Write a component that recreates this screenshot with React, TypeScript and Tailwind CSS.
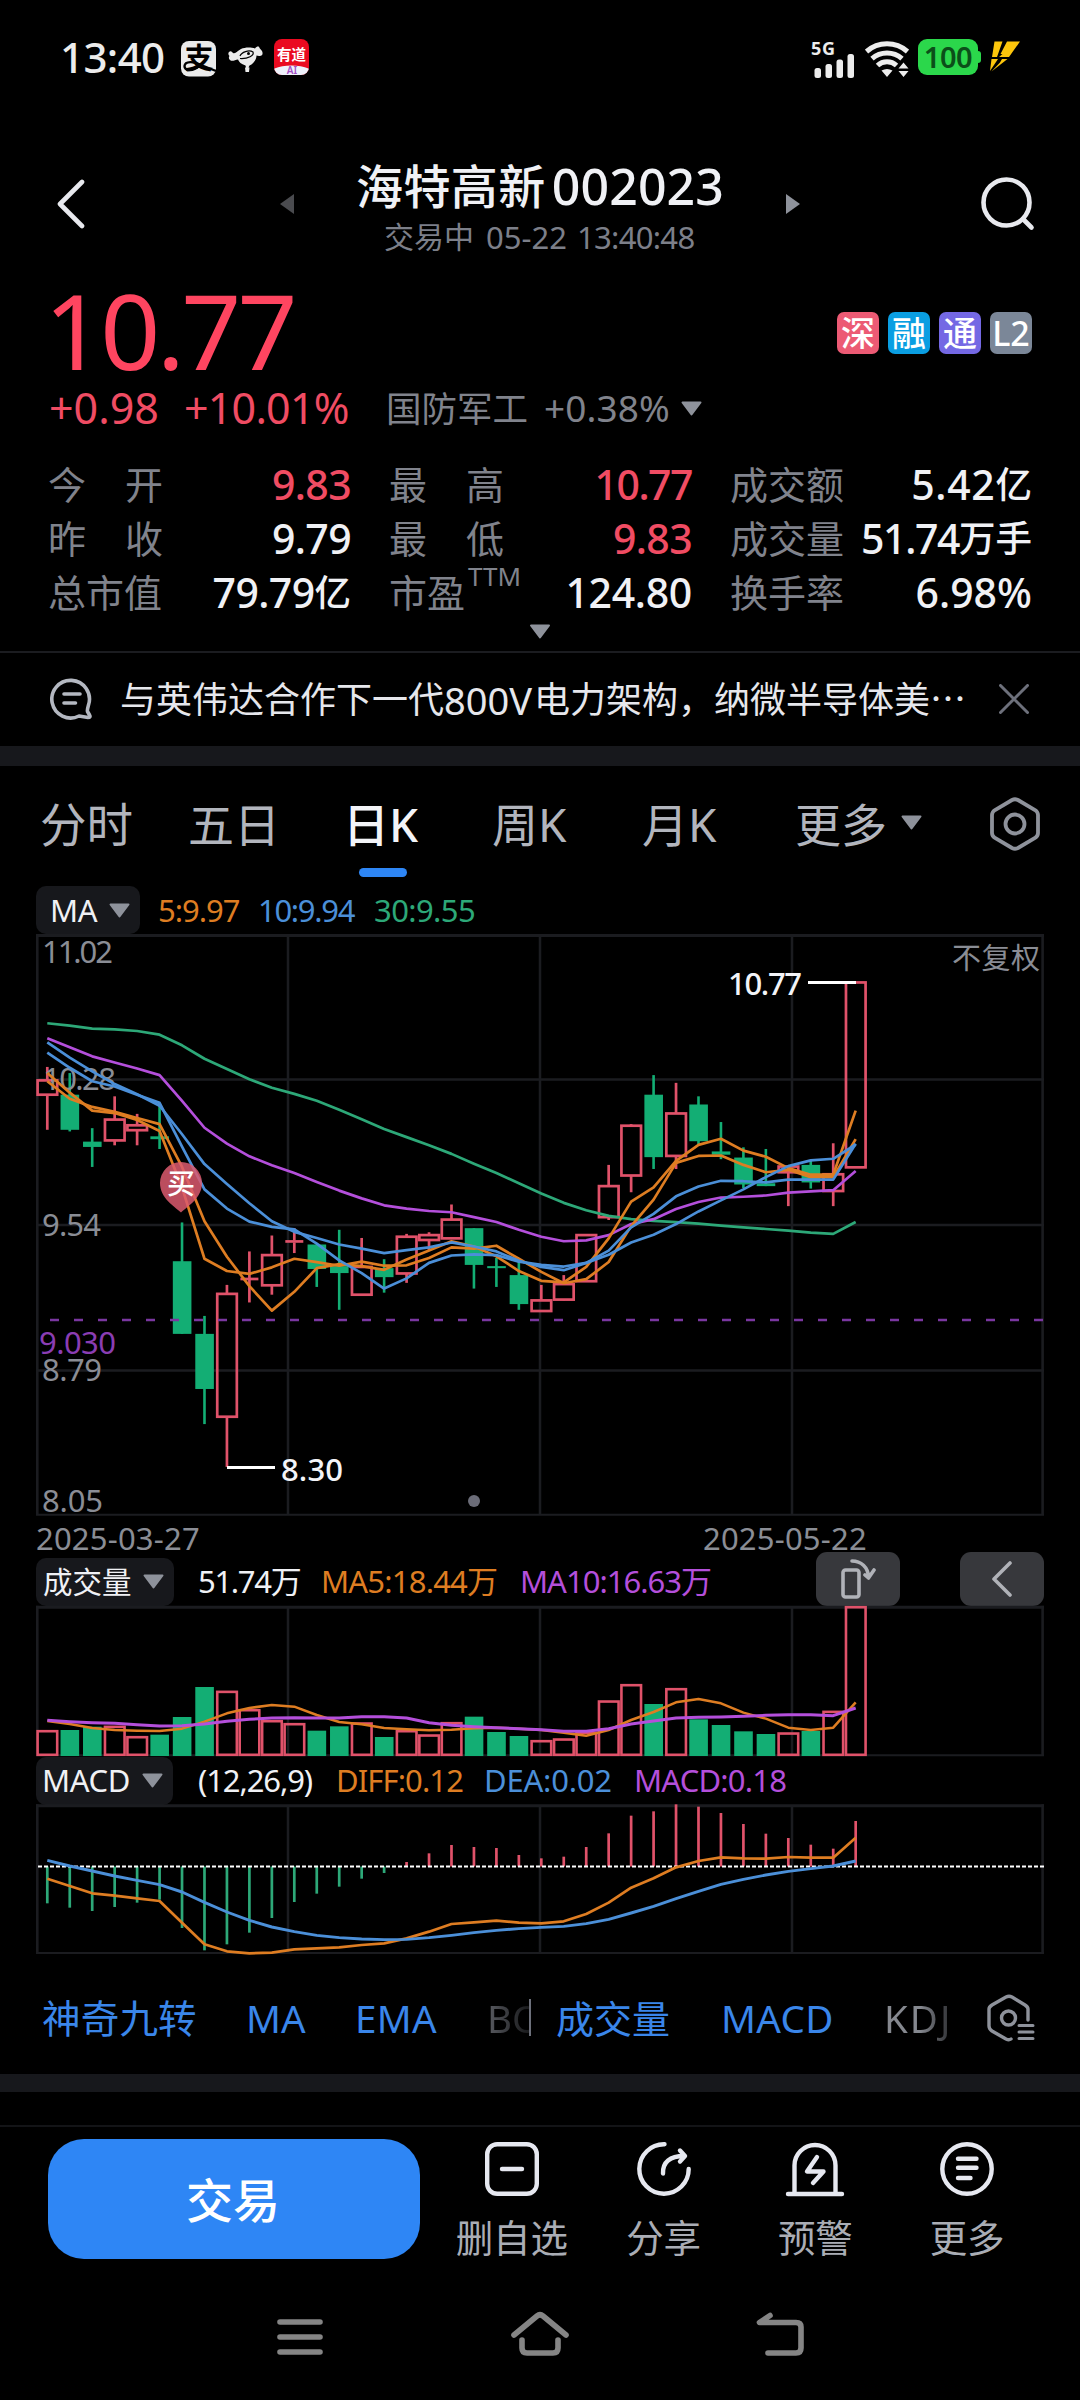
import React from "react";

type Candle = { up: boolean; hi: number; top: number; bot: number; lo: number };

const c = (k: "r" | "g", hi: number, top: number, bot: number, lo: number): Candle => ({
  up: k === "r",
  hi,
  top,
  bot,
  lo,
});

const FIRST_X = 47.3;
const STEP = 22.455;
const cx = (i: number) => FIRST_X + i * STEP;

// Price chart values are offsets on a 2.45-per-pixel scale; the sub charts use 3-per-pixel.
const py = (v: number) => 920 + v / 2.45;
const sy = (v: number) => 1540 + v / 3;

const candles: Candle[] = [
  c("r", 360, 393, 428, 514), c("g", 375, 428, 514, 518), c("g", 510, 543, 556, 605),
  c("r", 432, 489, 540, 552), c("r", 475, 503, 515, 552), c("g", 455, 530, 537, 561),
  c("g", 741, 836, 1014, 1014), c("g", 970, 1014, 1149, 1235), c("r", 894, 916, 1217, 1340),
  c("r", 812, 877, 882, 937), c("r", 773, 821, 895, 918), c("r", 755, 785, 790, 816),
  c("g", 795, 795, 855, 899), c("g", 759, 848, 865, 955), c("r", 779, 850, 918, 918),
  c("g", 831, 853, 875, 913), c("r", 769, 776, 866, 889), c("r", 765, 772, 784, 810),
  c("r", 697, 734, 780, 780), c("g", 755, 755, 845, 903), c("g", 828, 848, 853, 899),
  c("g", 838, 870, 941, 955), c("r", 894, 932, 958, 958), c("r", 870, 892, 930, 932),
  c("r", 772, 772, 885, 885), c("r", 600, 652, 728, 735), c("r", 500, 504, 626, 667),
  c("g", 380, 428, 581, 610), c("r", 399, 474, 578, 610), c("g", 432, 452, 542, 550),
  c("g", 495, 567, 575, 586), c("g", 557, 582, 648, 657), c("g", 561, 645, 652, 652),
  c("r", 603, 604, 618, 701), c("g", 590, 600, 643, 658), c("r", 547, 623, 664, 701),
  c("r", 153, 153, 606, 606),
];

const ma30 = [253, 259, 266, 268, 272, 281, 307, 340, 365, 390, 411, 426, 443, 465, 488, 512, 532, 552, 573, 597, 620, 645, 670, 693, 711, 725, 733, 737, 740, 744, 749, 753, 757, 761, 766, 769, 740];
const ma20 = [290, 312, 334, 349, 364, 380, 443, 509, 548, 579, 601, 620, 642, 663, 682, 699, 707, 713, 716, 728, 740, 759, 776, 787, 785, 772, 745, 733, 708, 691, 680, 678, 675, 668, 665, 662, 615];
const ma10a = [300, 337, 371, 402, 427, 455, 525, 598, 647, 694, 738, 764, 779, 795, 805, 816, 809, 802, 790, 800, 812, 835, 850, 858, 840, 810, 753, 720, 677, 653, 639, 640, 643, 636, 636, 636, 548];
const ma10b = [325, 362, 395, 408, 428, 448, 555, 660, 707, 739, 752, 758, 793, 834, 865, 903, 878, 840, 822, 819, 821, 837, 845, 849, 840, 820, 790, 771, 745, 714, 687, 660, 630, 603, 589, 585, 550];
const ma5a = [375, 423, 467, 473, 490, 517, 655, 830, 860, 867, 851, 830, 838, 847, 837, 847, 846, 828, 802, 805, 798, 830, 862, 890, 880, 838, 750, 685, 595, 578, 577, 600, 618, 612, 630, 630, 537];
const ma5b = [395, 438, 458, 470, 485, 500, 605, 738, 825, 897, 957, 911, 853, 843, 848, 857, 832, 810, 787, 800, 824, 860, 884, 888, 850, 780, 690, 655, 590, 551, 536, 565, 580, 608, 624, 624, 467];

const volTop = [570, 570, 560, 557, 588, 584, 531, 441, 452, 507, 540, 549, 572, 559, 547, 591, 570, 583, 546, 530, 576, 588, 600, 595, 575, 481, 432, 492, 444, 538, 555, 574, 582, 577, 573, 512, 198];
const vol5 = [543, 552, 564, 570, 572, 573, 566, 545, 520, 504, 495, 500, 525, 546, 553, 564, 568, 571, 569, 565, 563, 566, 570, 578, 587, 570, 540, 516, 487, 477, 490, 518, 536, 563, 570, 563, 487];
const vol10 = [541, 545, 548, 550, 554, 558, 557, 552, 544, 538, 534, 533, 534, 534, 530, 530, 534, 548, 556, 560, 563, 566, 569, 574, 574, 566, 552, 543, 534, 532, 531, 529, 526, 524, 524, 527, 504];

const macd = [1090, 1103, 1113, 1101, 1088, 1079, 1164, 1231, 1213, 1178, 1134, 1086, 1061, 1040, 1016, 999, 966, 940, 915, 921, 924, 945, 955, 950, 921, 880, 827, 814, 793, 800, 819, 852, 881, 894, 914, 926, 843];
const diff = [1016, 1038, 1060, 1067, 1075, 1083, 1148, 1213, 1234, 1240, 1238, 1228, 1225, 1222, 1215, 1210, 1195, 1175, 1152, 1147, 1142, 1148, 1150, 1144, 1122, 1088, 1043, 1015, 982, 963, 952, 955, 956, 951, 953, 953, 893];
const dea = [961, 978, 993, 1008, 1021, 1034, 1056, 1087, 1116, 1141, 1161, 1175, 1186, 1193, 1197, 1199, 1198, 1193, 1186, 1178, 1171, 1166, 1162, 1159, 1151, 1138, 1119, 1099, 1076, 1054, 1033, 1018, 1005, 994, 986, 978, 963];

const RED = "#e0526a";
const GREEN = "#13ae74";
const GRID = "#1b1c20";
const ORANGE = "#de7d22";
const BLUE = "#4b8fd8";
const PURPLE = "#b44fdb";
const TEAL = "#2da878";

const pts = (a: number[], f: (v: number) => number) => a.map((v, i) => `${cx(i)},${f(v)}`).join(" ");

function Series({ data, color, f, w = 2.7 }: { data: number[]; color: string; f: (v: number) => number; w?: number }) {
  return <polyline points={pts(data, f)} fill="none" stroke={color} strokeWidth={w} strokeLinejoin="round" />;
}

function Grid({ top, bottom }: { top: number; bottom: number }) {
  return (
    <g stroke={GRID}>
      {[288, 540, 792].map((x) => (
        <line key={x} x1={x} x2={x} y1={top} y2={bottom} strokeWidth={2.5} />
      ))}
      <line x1={37.3} x2={37.3} y1={top - 1.5} y2={bottom} strokeWidth={2.6} />
      <line x1={1042.6} x2={1042.6} y1={top - 1.5} y2={bottom} strokeWidth={2.6} />
      <line x1={36} x2={1044} y1={top} y2={top} strokeWidth={3} />
      <line x1={36} x2={1044} y1={bottom} y2={bottom} strokeWidth={2} />
    </g>
  );
}

function ChartLabel(p: { x: number; y: number; w: number; fill?: string; size?: number; weight?: number; children: string }) {
  return (
    <text
      x={p.x}
      y={p.y}
      textLength={p.w}
      fill={p.fill ?? "#8a8d95"}
      fontSize={p.size ?? 31}
      fontWeight={p.weight ?? 400}
    >
      {p.children}
    </text>
  );
}

function PriceChart() {
  return (
    <svg className="block shrink-0" width={1080} height={584} viewBox="0 933 1080 584">
      <Grid top={935.5} bottom={1514.7} />
      {[1079.5, 1225, 1370.5].map((y) => (
        <line key={y} x1={36} x2={1044} y1={y} y2={y} stroke={GRID} strokeWidth={2.5} />
      ))}
      {candles.map((d, i) => {
        const x = cx(i);
        const t = py(d.top);
        const b = py(d.bot);
        return d.up ? (
          <g key={i} stroke={RED} strokeWidth={2.7} fill="none">
            <line x1={x} x2={x} y1={py(d.hi)} y2={t} />
            {b - t < 3 ? (
              <line x1={x - 9} x2={x + 9} y1={(t + b) / 2} y2={(t + b) / 2} />
            ) : (
              <rect x={x - 9.7} y={t} width={19.6} height={b - t} />
            )}
            <line x1={x} x2={x} y1={b} y2={py(d.lo)} />
          </g>
        ) : (
          <g key={i} fill={GREEN}>
            <rect x={x - 1.3} y={py(d.hi)} width={2.6} height={py(d.lo) - py(d.hi)} />
            <rect x={x - 9.2} y={t} width={18.6} height={b - t} />
          </g>
        );
      })}
      <line x1={50} x2={1043} y1={1320} y2={1320} stroke="#7a37a0" strokeWidth={2.6} strokeDasharray="9 15" />
      <ChartLabel x={42} y={963} w={71}>11.02</ChartLabel>
      <ChartLabel x={43} y={1090} w={73}>10.28</ChartLabel>
      <ChartLabel x={42} y={1236} w={59}>9.54</ChartLabel>
      <ChartLabel x={42} y={1381} w={60}>8.79</ChartLabel>
      <ChartLabel x={42} y={1512} w={61}>8.05</ChartLabel>
      <ChartLabel x={39} y={1354} w={77} fill="#8a3db3">9.030</ChartLabel>
      <Series data={ma30} color={TEAL} f={py} />
      <Series data={ma20} color={PURPLE} f={py} />
      <Series data={ma5a} color={ORANGE} f={py} />
      <Series data={ma5b} color={ORANGE} f={py} />
      <Series data={ma10a} color={BLUE} f={py} />
      <Series data={ma10b} color={BLUE} f={py} />
      <ChartLabel x={952} y={969} w={88} size={29}>不复权</ChartLabel>
      <line x1={808} x2={856} y1={982.5} y2={982.5} stroke="#fff" strokeWidth={2.8} />
      <ChartLabel x={728} y={995} w={74} fill="#f3f4f8" weight={500}>10.77</ChartLabel>
      <line x1={227} x2={275} y1={1467.5} y2={1467.5} stroke="#fff" strokeWidth={2.8} />
      <ChartLabel x={281} y={1481} w={62} fill="#f3f4f8" weight={500}>8.30</ChartLabel>
      <circle cx={474} cy={1501} r={6} fill="#6b6c78" />
      <path
        d="M181 1212.5 C174 1206 160 1198 160 1183 A21 21 0 0 1 202 1183 C202 1198 188 1206 181 1212.5Z"
        fill="#dc5a6e"
        fillOpacity={0.85}
      />
      <text x={181} y={1194} textAnchor="middle" fontSize={28} fontWeight={500} fill="#fff">买</text>
    </svg>
  );
}

function VolumeChart() {
  return (
    <svg className="block shrink-0" width={1080} height={152} viewBox="0 1605 1080 152">
      <Grid top={1607.3} bottom={1755.3} />
      {volTop.map((v, i) => {
        const x = cx(i);
        const t = sy(v);
        return candles[i].up ? (
          <rect key={i} x={x - 9.7} y={t + 1.2} width={19.6} height={1754.8 - t - 1.2} fill="none" stroke={RED} strokeWidth={2.6} />
        ) : (
          <rect key={i} x={x - 9.2} y={t} width={18.6} height={1756 - t} fill={GREEN} />
        );
      })}
      <Series data={vol5} color={ORANGE} f={sy} w={2.5} />
      <Series data={vol10} color={PURPLE} f={sy} w={3} />
    </svg>
  );
}

function MacdChart() {
  return (
    <svg className="block shrink-0" width={1080} height={151} viewBox="0 1804 1080 151">
      <Grid top={1805.7} bottom={1953} />
      {macd.map((v, i) => (
        <line key={i} x1={cx(i)} x2={cx(i)} y1={1866.5} y2={sy(v)} stroke={v > 980 ? TEAL : RED} strokeWidth={2.7} />
      ))}
      <line x1={38} x2={1044} y1={1866.5} y2={1866.5} stroke="#fff" strokeWidth={2.2} strokeDasharray="4 2" />
      <Series data={diff} color={ORANGE} f={sy} w={2.7} />
      <Series data={dea} color={BLUE} f={sy} w={2.9} />
    </svg>
  );
}

function Down({ w = 21, h = 15, color = "#8e929b" }: { w?: number; h?: number; color?: string }) {
  return (
    <svg className="block shrink-0" width={w} height={h} viewBox="0 0 21 15">
      <path d="M1.5 1.5H19.5L10.5 13.5Z" fill={color} stroke={color} strokeWidth={2} strokeLinejoin="round" />
    </svg>
  );
}

function StatusBar() {
  return (
    <div className="flex h-[114px] shrink-0 items-center">
      <span className="ml-[60px] w-[121px] text-[42px] font-medium leading-[58px] text-[#ececec]">
        <span className="tracking-[-0.6px]">13:40</span>
      </span>
      <svg className="mt-[3px] block" width={36} height={36} viewBox="0 0 36 36">
        <rect width={35} height={35.5} rx={8} fill="#ebebeb" />
        <text x={18} y={28} textAnchor="middle" fontSize={29} fontWeight={600} fill="#000">支</text>
        <path d="M18 25C12 31 3.500 30 3.500 25C4 20 13 20 20 24L35 30" fill="none" stroke="#000" strokeWidth={2.400} />
      </svg>
      <svg className="ml-[11px] mt-[4px] block" width={35} height={27} viewBox="0 0 35 27">
        <path
          d="M1 6Q3 4 5 7C8 8 9 5 13 3C17 1 23 1 27 2.500C29 0 31 0 31.500 2L34 5C35.500 8 34 10.500 31 10L28.500 9.500C28.500 14 25 18 21.500 19.500L20.500 21.500H21.500L21 26H17.500L17 21.500H18L17.500 19.500C13 18 11 16 10 13.500C7 14 4 16 2 14Q0 12 1.500 10Q-0.500 8 1 6Z"
          fill="#ebebeb"
        />
        <path d="M12 10C13.500 6 21 3.500 25 6C26.500 9.500 20 13 12 12.500" fill="none" stroke="#000" strokeWidth={1.2} />
        <circle cx={20.500} cy={7.500} r={1.500} fill="#000" />
      </svg>
      <svg className="ml-[11px] block" width={36} height={37} viewBox="0 0 36 37">
        <clipPath id="yd">
          <rect width={35} height={36} rx={8} />
        </clipPath>
        <g clipPath="url(#yd)">
          <rect width={36} height={37} fill="#ea0a20" />
          <ellipse cx={17.500} cy={37} rx={24} ry={10.500} fill="#eef1fb" />
        </g>
        <text x={17.500} y={20.500} textAnchor="middle" fontSize={14.500} fontWeight={600} fill="#fff">有道</text>
        <text x={18} y={35} textAnchor="middle" fontSize={10} fontWeight={600} fill="#a34ec4">AI</text>
      </svg>
      <div className="flex-1" />
      <svg className="mt-[3px] block" width={44} height={38} viewBox="0 0 44 38">
        <text x={0} y={15} fontSize={18} fontWeight={700} textLength={24} fill="#ececec">5G</text>
        <g fill="#ececec">
          <rect x={3.500} y={28} width={6.500} height={10} rx={2.500} />
          <rect x={14.500} y={24} width={6.500} height={14} rx={2.500} />
          <rect x={25.500} y={19.500} width={6.500} height={18.500} rx={2.500} />
          <rect x={36.500} y={14} width={6.500} height={24} rx={2.500} />
        </g>
      </svg>
      <svg className="ml-[10px] mt-[2px] block" width={44} height={37} viewBox="0 0 44 37">
        <g fill="none" stroke="#ececec" strokeWidth={5}>
          <path d="M1.500 11.500A31 31 0 0 1 42.500 11.500" />
          <path d="M7 18.700A22.500 22.500 0 0 1 37 18.700" />
          <path d="M12.500 25.500A14 14 0 0 1 31.500 25.500" />
        </g>
        <path d="M16.500 30.500Q22 27.500 27.500 30.500L22 37Z M38.500 22.500L43.500 28.500H33.500Z M33.500 31H43.500L38.500 37Z" fill="#ececec" />
      </svg>
      <div className="ml-[9px] mt-[-1px] flex items-center">
        <div className="flex h-[36px] w-[60px] items-center justify-center rounded-[9px] bg-[#2bd74b] text-[29px] font-semibold leading-[36px] tracking-[-0.5px] text-[#0b4f19]">
          100
        </div>
        <div className="h-[12px] w-[3px] rounded-r-[3px] bg-[#2bd74b]" />
      </div>
      <svg className="ml-[9px] mr-[60px] mt-[-1px] block" width={30} height={31} viewBox="0 0 30 31">
        <path d="M4.500 0.500H12.500L7 16H2Z M17 0.500H30L19 16H9L12.500 13H10.500Z M1.500 18H8L0 30Z M12 18H17.500L1.500 30.500L10 21.500Z" fill="#fdc60c" />
      </svg>
    </div>
  );
}

function Header() {
  return (
    <div className="flex h-[166px] shrink-0 justify-between pl-[56px] pr-[44px]">
      <svg className="mt-[65px] block" width={30} height={50} viewBox="0 0 30 50">
        <path d="M26 3L4 25L26 47" fill="none" stroke="#e8e9ee" strokeWidth={4.600} strokeLinecap="round" strokeLinejoin="round" />
      </svg>
      <div className="flex pl-[14px]">
        <svg className="mr-[62px] mt-[80px] block" width={14} height={20} viewBox="0 0 14 20">
          <path d="M14 0V20L0 10Z" fill="#4a4b4f" />
        </svg>
        <div className="w-[368px] pt-[42px]">
          <div className="flex h-[59px] items-center whitespace-nowrap font-medium leading-[58px] text-[#f0f1f5]">
            <span className="w-[197px] text-[47px] tracking-[0.4px]">海特高新</span>
            <span className="text-[50px] tracking-[0.1px]">002023</span>
          </div>
          <div className="flex h-[44px] items-center whitespace-nowrap pl-[28px] text-[31px] leading-[44px] text-[#7c7f89]">
            <span className="w-[102px] text-[30px]">交易中</span>
            <span className="w-[91px]">05-22</span>
            <span className="tracking-[-0.7px]">13:40:48</span>
          </div>
        </div>
        <svg className="ml-[62px] mt-[80px] block" width={14} height={20} viewBox="0 0 14 20">
          <path d="M0 0V20L14 10Z" fill="#8e929b" />
        </svg>
      </div>
      <svg className="mt-[62px] block" width={56} height={56} viewBox="0 0 56 56">
        <circle cx={26.500} cy={26.500} r={23} fill="none" stroke="#e8e9ee" strokeWidth={4.600} />
        <path d="M43 43L51.500 51.500" stroke="#e8e9ee" strokeWidth={4.600} strokeLinecap="round" />
      </svg>
    </div>
  );
}

function Badge({ cls, children }: { cls: string; children: React.ReactNode }) {
  return (
    <span className={`flex h-[42px] w-[42px] items-center justify-center rounded-[7px] text-[34px] font-medium leading-[42px] text-white ${cls}`}>
      {children}
    </span>
  );
}

function Cell(p: {
  label: React.ReactNode;
  value: string;
  unit?: string;
  red?: boolean;
  spread?: boolean;
  tracking?: string;
}) {
  return (
    <div className="flex h-[54px] items-center justify-between whitespace-nowrap leading-[54px]">
      <span className={`flex text-[38px] text-[#80838c] ${p.spread ? "w-[115px] justify-between" : ""}`}>{p.label}</span>
      <span className={`flex font-medium ${p.red ? "text-[#f04c63]" : "text-[#f0f1f5]"}`}>
        <span className={`text-[41px] ${p.tracking ?? "tracking-[-0.6px]"}`}>{p.value}</span>
        {p.unit && <span className="text-[36.500px]">{p.unit}</span>}
      </span>
    </div>
  );
}

function Quote() {
  return (
    <div className="shrink-0 px-[48px]">
      <div className="flex h-[98px] items-center justify-between">
        <span className="ml-[-4px] mt-[2px] text-[105px] leading-[140px] tracking-[-3.700px] text-[#ff4560]">10.77</span>
        <div className="mt-[8px] flex gap-[9px]">
          <Badge cls="bg-[#ec5a74]">深</Badge>
          <Badge cls="bg-[#0a9ee2]">融</Badge>
          <Badge cls="bg-[#7468e4]">通</Badge>
          <Badge cls="bg-[#7b8798]">L2</Badge>
        </div>
      </div>
      <div className="mt-[3px] flex h-[54px] items-center whitespace-nowrap leading-[54px] text-[#80838c]">
        <span className="ml-px w-[135px] text-[43px] text-[#f04c63]">+0.98</span>
        <span className="w-[202px] text-[43px] tracking-[-0.800px] text-[#f04c63]">+10.01%</span>
        <span className="w-[158px] text-[35.500px]">国防军工</span>
        <span className="w-[137px] text-[37px] tracking-[0.1px]">+0.38%</span>
        <Down />
      </div>
      <div className="mt-[22px] grid grid-cols-[303px_303px_302px] justify-between gap-y-0">
        <Cell spread label={<><span>今</span><span>开</span></>} value="9.83" red />
        <Cell spread label={<><span>最</span><span>高</span></>} value="10.77" red tracking="tracking-[-1.500px]" />
        <Cell label="成交额" value="5.42" unit="亿" tracking="tracking-[0.700px]" />
        <Cell spread label={<><span>昨</span><span>收</span></>} value="9.79" />
        <Cell spread label={<><span>最</span><span>低</span></>} value="9.83" red />
        <Cell label="成交量" value="51.74" unit="万手" tracking="tracking-[-1.400px]" />
        <Cell label="总市值" value="79.79" unit="亿" />
        <Cell
          label={
            <>
              <span>市盈</span>
              <span className="mt-[-16px] ml-[3px] text-[26px]">TTM</span>
            </>
          }
          value="124.80"
          tracking="tracking-[-0.300px]"
        />
        <Cell label="换手率" value="6.98%" tracking="tracking-[0px]" />
      </div>
      <div className="mt-[5px] flex h-[27px] justify-center">
        <Down w={22} h={15} />
      </div>
    </div>
  );
}

function News() {
  return (
    <div className="flex h-[95px] shrink-0 items-center border-t-2 border-[#1b1c20] pl-[50px] pr-[49px]">
      <svg className="mt-[-2px] block" width={42} height={42} viewBox="0 0 42 42">
        <path
          d="M38.500 27A18.800 18.800 0 1 0 29 38L38 39.500C40 39.500 40.500 38.500 39.500 37L37.500 33.500C37 32 37.800 29.500 38.500 27Z"
          fill="none"
          stroke="#b4b8c1"
          strokeWidth={3.600}
          strokeLinejoin="round"
        />
        <path d="M14 16H30M14 25H25.500" stroke="#b4b8c1" strokeWidth={3.600} strokeLinecap="round" />
      </svg>
      <div className="ml-[28px] flex w-[879px] whitespace-nowrap text-[36px] leading-[54px] text-[#e6e7ec]">
        <span className="w-[324px]">与英伟达合作下一代</span>
        <span className="w-[90px] text-[38px]">800V</span>
        <span>电力架构，纳微半导体美⋯</span>
      </div>
      <svg className="mt-[-1px] block" width={30} height={30} viewBox="0 0 30 30">
        <path d="M1.500 1.500L28.500 28.500M28.500 1.500L1.500 28.500" stroke="#6d707b" strokeWidth={3} strokeLinecap="round" />
      </svg>
    </div>
  );
}

function Tabs() {
  return (
    <div className="flex h-[120px] shrink-0 whitespace-nowrap pl-[40px] text-[46px] leading-[116px] text-[#b2b5bd]">
      <span className="w-[148px] text-[46.500px]">分时</span>
      <span className="w-[155px]">五日</span>
      <span className="relative w-[149px] font-medium text-[#f3f4f8]">
        日K
        <span className="absolute bottom-[9px] left-[16px] h-[9px] w-[48px] rounded-full bg-[#2e86f5]" />
      </span>
      <span className="w-[150px]">周K</span>
      <span className="w-[153px]">月K</span>
      <span className="w-[106px]">更多</span>
      <span className="mt-[49px]">
        <Down />
      </span>
      <svg className="ml-[68px] mt-[31px] block" width={50} height={54} viewBox="0 0 50 54">
        <path
          d="M22 3Q25 1.500 28 3L45 13Q48 15 48 18V36Q48 39 45 41L28 51Q25 52.500 22 51L5 41Q2 39 2 36V18Q2 15 5 13Z"
          fill="none"
          stroke="#8e929b"
          strokeWidth={3.800}
        />
        <circle cx={25} cy={27} r={9.500} fill="none" stroke="#8e929b" strokeWidth={3.800} />
      </svg>
    </div>
  );
}

function Chip({ label, cls }: { label: string; cls: string }) {
  return (
    <div className={`flex h-[48px] shrink-0 items-center rounded-[10px] bg-[#17181c] text-[#f0f1f5] ${cls}`}>
      <span className="flex-1">{label}</span>
      <Down />
    </div>
  );
}

function SideButton({ children, cls }: { children: React.ReactNode; cls: string }) {
  return <div className={`mt-[-6px] flex h-[54px] w-[84px] shrink-0 items-center justify-center rounded-[11px] bg-[#37383c] ${cls}`}>{children}</div>;
}

function Indicators() {
  return (
    <div className="flex h-[119px] shrink-0 items-center whitespace-nowrap pl-[42px] pt-[6px] text-[38.500px] leading-[60px] text-[#3a86ea]">
      <span className="w-[204px] tracking-[0.200px]">神奇九转</span>
      <span className="w-[109px]">MA</span>
      <span className="w-[132px] tracking-[0.300px]">EMA</span>
      <span className="w-[42px] overflow-hidden bg-gradient-to-r from-[#5a5c62] to-[#18191b] bg-clip-text text-transparent">BOLL</span>
      <span className="h-[37px] w-[2px] bg-[#6d707b]" />
      <span className="ml-[25px] w-[165px] text-[38px]">成交量</span>
      <span className="w-[163px] tracking-[0.400px]">MACD</span>
      <span className="w-[72px] overflow-hidden bg-gradient-to-r from-[#85888f] from-50% to-[#222326] bg-clip-text tracking-[2px] text-transparent">KDJ</span>
      <svg className="ml-[31px] block" width={48} height={48} viewBox="0 0 48 48">
        <g fill="none" stroke="#8e929b" strokeWidth={3.400} strokeLinecap="round">
          <path d="M24 45Q22 46.500 19 45L5 37Q2 35 2 32V15Q2 13 5 11L19 3Q22 1.500 25 3L38 11Q41 13 41 15V26" />
          <circle cx={21.500} cy={24} r={7} />
          <path d="M32 31.500H46M32 38H46M32 44.500H46" strokeWidth={3} />
        </g>
      </svg>
    </div>
  );
}

function Action({ label, children }: { label: string; children: React.ReactNode }) {
  return (
    <div className="flex flex-col items-center">
      <svg className="block" width={60} height={56} viewBox="-3 -1 60 56">
        <g fill="none" stroke="#e6e8f0" strokeWidth={4.400} strokeLinecap="round" strokeLinejoin="round">
          {children}
        </g>
      </svg>
      <span className="mt-[14px] whitespace-nowrap text-[37.500px] leading-[54px] text-[#aaadb5]">{label}</span>
    </div>
  );
}

function BottomBar() {
  return (
    <div className="flex h-[146px] shrink-0 border-t-2 border-[#131417] pl-[48px] pt-[12px]">
      <div className="flex h-[120px] w-[372px] items-center justify-center rounded-[36px] bg-[#2e86f5] pr-[2px] pt-[2px] text-[47px] font-medium leading-[60px] text-white">
        交易
      </div>
      <div className="ml-[16px] mt-[2px] grid w-[607px] grid-cols-4">
        <Action label="删自选">
          <rect x={2.200} y={2.200} width={49.600} height={49.600} rx={10} />
          <path d="M17 27H37" />
        </Action>
        <Action label="分享">
          <path d="M27.500 2.300A24.700 24.700 0 1 0 51.700 27" />
          <path d="M26 31.500C25.500 20 33 14 47 14M43 8.500L48 14L43 19.500" />
        </Action>
        <Action label="预警">
          <path d="M6.500 51V23.500A20.500 20.500 0 0 1 47.500 23.500V51M0 52H54" />
          <path d="M29 15L19 29.500H35.500L25 41" />
        </Action>
        <Action label="更多">
          <circle cx={27} cy={27} r={24.700} />
          <path d="M18 16.700H36.500M18 25.700H36.500M18 36H30.500" />
        </Action>
      </div>
    </div>
  );
}

function SystemNav() {
  return (
    <div className="flex h-[127px] shrink-0 justify-between pl-[276px] pr-[275px] pt-[40px]">
      <svg className="mt-[7px] block" width={48} height={38} viewBox="0 0 48 38">
        <path d="M4 4H44M4 19H44M4 34H44" stroke="#858585" strokeWidth={5.600} strokeLinecap="round" />
      </svg>
      <svg className="block" width={60} height={46} viewBox="0 0 60 46">
        <path
          d="M4 24L27 5Q30 2.500 33 5L56 24M12 29V37Q12 42 17 42H43Q48 42 48 37V29"
          fill="none" stroke="#858585" strokeWidth={5.600} strokeLinecap="round"
        />
      </svg>
      <svg className="block" width={50} height={46} viewBox="0 0 50 46">
        <path
          d="M15 4.500L4.500 11.500H41Q46 11.500 46 16V37Q46 42 41 42H13"
          fill="none" stroke="#858585" strokeWidth={5.600} strokeLinecap="round" strokeLinejoin="round"
        />
      </svg>
    </div>
  );
}

export default function App() {
  return (
    <div className="flex h-[2400px] w-[1080px] flex-col overflow-hidden bg-black font-['Noto_Sans','Noto_Sans_CJK_SC',sans-serif]">
      <StatusBar />
      <Header />
      <Quote />
      <News />
      <div className="h-[20px] shrink-0 bg-[#17181c]" />
      <Tabs />
      <div className="flex h-[47px] shrink-0 items-center whitespace-nowrap pl-[36px] pt-[1px] text-[31px] leading-[47px] tracking-[-0.8px]">
        <Chip label="MA" cls="w-[104px] pl-[14px] pr-[10px] tracking-[-0.4px]" />
        <span className="ml-[18px] w-[100px] tracking-[-1px] text-[#de7d22]">5:9.97</span>
        <span className="w-[116px] tracking-[-1.300px] text-[#4b8fd8]">10:9.94</span>
        <span className="tracking-[-0.600px] text-[#2da878]">30:9.55</span>
      </div>
      <PriceChart />
      <div className="flex h-[41px] shrink-0 whitespace-nowrap pl-[36px] text-[31px] leading-[42px] tracking-[0.200px] text-[#8a8d95]">
        <span className="w-[667px]">2025-03-27</span>
        <span>2025-05-22</span>
      </div>
      <div className="flex h-[47px] shrink-0 items-center whitespace-nowrap pl-[36px] text-[31px] leading-[49px]">
        <Chip label="成交量" cls="w-[138px] pl-[7px] pr-[10px] text-[29.500px]" />
        <span className="ml-[24px] w-[123px] tracking-[-1.300px] text-[#f0f1f5]">51.74万</span>
        <span className="w-[199px] tracking-[-0.800px] text-[#de7d22]">MA5:18.44万</span>
        <span className="w-[296px] tracking-[-1px] text-[#b44fdb]">MA10:16.63万</span>
        <SideButton cls="">
          <svg className="block" width={36} height={42} viewBox="0 0 36 42">
            <g fill="none" stroke="#b0b2b8" strokeWidth={3.600} strokeLinecap="round" strokeLinejoin="round">
              <rect x={3} y={12} width={16} height={27} rx={2.500} />
              <path d="M12 3C21 3 28 9 28.500 19M34 12L28.500 20L25 17" />
            </g>
          </svg>
        </SideButton>
        <SideButton cls="ml-[60px]">
          <svg className="block" width={22} height={36} viewBox="0 0 22 36">
            <path d="M19 2L3 18L19 34" fill="none" stroke="#b0b2b8" strokeWidth={3.600} strokeLinecap="round" strokeLinejoin="round" />
          </svg>
        </SideButton>
      </div>
      <VolumeChart />
      <div className="flex h-[47px] shrink-0 items-center whitespace-nowrap pl-[36px] text-[31px] leading-[49px]">
        <Chip label="MACD" cls="w-[137px] pl-[6px] pr-[10px] tracking-[-0.400px]" />
        <span className="ml-[25px] w-[138px] tracking-[-1.100px] text-[#f0f1f5]">(12,26,9)</span>
        <span className="w-[148px] tracking-[-0.900px] text-[#de7d22]">DIFF:0.12</span>
        <span className="w-[150px] tracking-[-0.200px] text-[#4b8fd8]">DEA:0.02</span>
        <span className="tracking-[-0.800px] text-[#b44fdb]">MACD:0.18</span>
      </div>
      <MacdChart />
      <Indicators />
      <div className="h-[18px] shrink-0 bg-[#17181c]" />
      <div className="h-[33px] shrink-0" />
      <BottomBar />
      <SystemNav />
    </div>
  );
}
